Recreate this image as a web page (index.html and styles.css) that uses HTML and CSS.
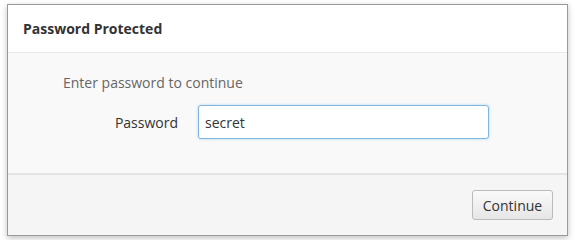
FILE: index.html
```html
<!DOCTYPE html>
<html lang="en">

<head>
    <meta charset="UTF-8">
    <title>Password Protected</title>
    <link rel="stylesheet" href="styles.css">
</head>

<body>

    <div class="dialog">
        <div class="dialog-header">
            <h2>Password Protected</h2>
        </div>

        <div class="dialog-body">
            <p class="hint">Enter password to continue</p>
            <div class="field">
                <label for="password">Password</label>
                <input type="text" id="password" value="secret">
            </div>
        </div>

        <div class="dialog-footer">
            <button type="button">Continue</button>
        </div>
    </div>

</body>

</html>
```

FILE: styles.css
```css
body {
    margin: 0;
    padding: 4px 7px;
    font-family: 'Open Sans', 'Noto Sans', sans-serif;
    background-color: #fff;
}

.dialog {
    width: 559px;
    border: 1px solid #9a9a9a;
    background-color: #f9f9f9;
    box-shadow: 0 2px 6px rgba(0, 0, 0, 0.25);
}

.dialog-header {
    background-color: #fff;
    height: 47px;
    padding: 0 15px;
    display: flex;
    align-items: center;
    border-bottom: 1px solid #e8e8e8;
}

.dialog-header h2 {
    margin: 0;
    font-size: 14px;
    font-weight: bold;
    color: #333;
}

.dialog-body {
    height: 122px;
    padding: 0 55px;
    box-sizing: border-box;
    border-bottom: 2px solid #e4e4e4;
}

.hint {
    margin: 0;
    padding-top: 20px;
    font-size: 14px;
    color: #666;
}

.field {
    display: flex;
    align-items: center;
    margin-top: 13px;
}

.field label {
    width: 135px;
    text-align: right;
    padding-right: 20px;
    box-sizing: border-box;
    font-size: 14px;
    color: #333;
}

.field input {
    width: 291px;
    height: 34px;
    box-sizing: border-box;
    padding: 0 6px;
    font-family: inherit;
    font-size: 14px;
    color: #333;
    border: 1px solid #7fb6dd;
    border-radius: 3px;
    box-shadow: 0 0 3px rgba(102, 175, 233, 0.5);
    outline: none;
}

.dialog-footer {
    height: 60px;
    padding: 0 14px;
    display: flex;
    align-items: center;
    justify-content: flex-end;
    background-color: #f5f5f5;
}

.dialog-footer button {
    width: 81px;
    height: 30px;
    font-family: inherit;
    font-size: 14px;
    color: #333;
    background: linear-gradient(#fafafa, #e6e6e6);
    border: 1px solid #bbb;
    border-radius: 3px;
}
```
